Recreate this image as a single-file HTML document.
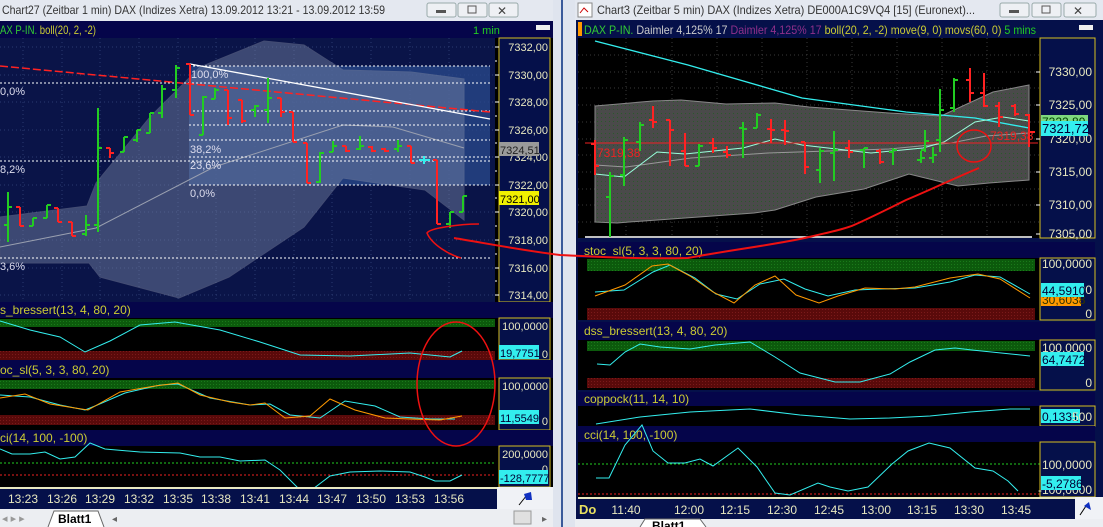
<!DOCTYPE html>
<html><head><meta charset="utf-8"><style>
html,body{margin:0;padding:0;width:1103px;height:527px;overflow:hidden;background:#d8dde8}
svg{display:block}
text{font-family:"Liberation Sans",sans-serif}
</style></head><body>
<svg width="1103" height="527" viewBox="0 0 1103 527" xmlns="http://www.w3.org/2000/svg">
<defs>
<pattern id="dots" width="4" height="4" patternUnits="userSpaceOnUse"><rect width="4" height="4" fill="#4a4a4a"/><rect x="1" y="1" width="1" height="1" fill="#2a5a2a"/></pattern>
<pattern id="gr" width="3" height="3" patternUnits="userSpaceOnUse"><rect width="3" height="3" fill="#0c5a0c"/><rect width="1" height="1" fill="#1a7a1a"/></pattern>
<pattern id="rd" width="3" height="3" patternUnits="userSpaceOnUse"><rect width="3" height="3" fill="#5a0a0a"/><rect width="1" height="1" fill="#7a1a1a"/></pattern>
</defs>
<rect x="0" y="0" width="555" height="527" fill="#e4e8f0"/>
<rect x="553" y="0" width="22" height="527" fill="#dfe4ee"/>
<rect x="561" y="0" width="2" height="527" fill="#3a5a9a"/>
<rect x="575" y="0" width="528" height="527" fill="#e4e8f0"/>
<text x="2" y="14" font-size="12" fill="#333" textLength="383" lengthAdjust="spacingAndGlyphs">Chart27 (Zeitbar 1 min)  DAX (Indizes Xetra) 13.09.2012 13:21  - 13.09.2012 13:59</text>
<g fill="#eef0f4" stroke="#9aa"><rect x="427" y="3" width="29" height="14" rx="2"/><rect x="458" y="3" width="29" height="14" rx="2"/><rect x="489" y="3" width="29" height="14" rx="2"/></g>
<rect x="436" y="10" width="10" height="3" fill="#555"/><rect x="468" y="6" width="8" height="7" fill="none" stroke="#555"/><text x="497" y="15" font-size="12" fill="#444">✕</text>
<rect x="578" y="3" width="14" height="14" fill="#fff" stroke="#888"/><path d="M580 13 L584 8 L588 12" stroke="#c00" fill="none"/>
<text x="597" y="14" font-size="12" fill="#333" textLength="378" lengthAdjust="spacingAndGlyphs">Chart3 (Zeitbar 5 min)  DAX (Indizes Xetra) DE000A1C9VQ4 [15] (Euronext)...</text>
<g fill="#eef0f4" stroke="#9aa"><rect x="1000" y="3" width="29" height="14" rx="2"/><rect x="1032" y="3" width="29" height="14" rx="2"/><rect x="1064" y="3" width="32" height="14" rx="2"/></g>
<rect x="1009" y="10" width="10" height="3" fill="#555"/><rect x="1042" y="6" width="8" height="7" fill="none" stroke="#555"/><text x="1073" y="15" font-size="12" fill="#444">✕</text>

<rect x="0" y="21" width="553" height="466" fill="#00003c"/>
<rect x="0" y="21" width="553" height="17" fill="#05054a"/>
<text x="0" y="34" font-size="12" textLength="96" lengthAdjust="spacingAndGlyphs"><tspan fill="#3c3">AX P-IN.</tspan><tspan fill="#cc3"> boll(20, 2, -2)</tspan></text>
<text x="473" y="34" font-size="11" fill="#2c2">1 min</text>
<rect x="536" y="25" width="14" height="5" fill="#eee"/>
<rect x="0" y="38" width="495" height="264" fill="#0a1448"/>
<g stroke="#2a3a70" stroke-dasharray="1,3"><path d="M0 47H495M0 75H495M0 102H495M0 130H495M0 157H495M0 185H495M0 212H495M0 240H495M0 268H495M0 295H495"/><path d="M23 38V302M62 38V302M100 38V302M139 38V302M178 38V302M216 38V302M255 38V302M294 38V302M332 38V302M371 38V302M410 38V302M449 38V302"/></g>
<rect x="189" y="66" width="301" height="119" fill="#2a4a8c" opacity="0.75"/>
<path d="M0 217L87 206L96 183L150 117L200 67L264 41L304 45L343 70L411 72L464 79L464 220L425 190L343 178L304 227L229 277L179 298L100 277L89 263L0 263Z" fill="#7a88a8" opacity="0.45" stroke="#8890a8"/>
<path d="M0 247L96 228L214 167L343 125L393 127L464 148" stroke="#9aa0b0" fill="none"/>
<g stroke="#fff" stroke-dasharray="2,2"><path d="M189 66H490M0 83H490M189 111H490M189 125H490M189 140H490M189 157H490M0 161H490M189 185H490M0 258H490"/></g>
<g font-size="11" fill="#dde"><text x="191" y="78">100,0%</text><text x="190" y="153">38,2%</text><text x="190" y="169">23,6%</text><text x="190" y="197">0,0%</text><text x="0" y="95">0,0%</text><text x="0" y="173">8,2%</text><text x="0" y="270">3,6%</text></g>
<path d="M0 66L490 112" stroke="#f22" stroke-width="1.5" stroke-dasharray="8,3"/>
<path d="M190 64L490 119" stroke="#fff" stroke-width="1.3"/>
<g stroke="#2c2" stroke-width="2" fill="none"><path d="M8 192V242M4 225H8M8 207H12M33 218V226M29 226H33M33 218H37M47 205V218M43 218H47M47 205H51M86 215V236M82 234H86M86 225H90M98 108V232M94 225H98M98 148H102M124 137V152M120 152H124M124 137H128M137 130V142M133 140H137M137 130H141M150 113V133M146 133H150M150 113H154M162 85V118M158 113H162M162 89H166M176 65V98M172 90H176M176 68H180M203 96V135M199 135H203M203 97H207M215 88V99M211 99H215M215 90H219M255 105V117M251 110H255M255 106H259M268 78V123M264 110H268M268 98H272M320 152V183M316 182H320M320 153H324M333 141V152M329 152H333M333 146H337M360 136V150M356 149H360M360 146H364M398 140V152M394 149H398M398 146H402M450 212V228M446 224H450M450 212H454M463 196V212M459 212H463M463 196H467"/></g>
<g stroke="#f22" stroke-width="2" fill="none"><path d="M20 207V226M16 207H20M20 226H24M58 208V222M54 208H58M58 222H62M72 222V236M68 222H72M72 236H76M110 148V158M106 148H110M110 153H114M190 64V115M186 64H190M190 115H194M228 90V125M224 90H228M228 118H232M242 100V123M238 100H242M242 121H246M281 98V117M277 98H281M281 112H285M293 112V142M289 112H293M293 142H297M307 143V183M303 143H307M307 183H311M346 146V152M342 146H346M346 151H350M372 146V152M368 147H372M372 151H376M385 148V152M381 149H385M385 151H389M411 146V163M407 146H411M411 163H415M437 160V224M433 160H437M437 224H441"/></g>
<path d="M419 160H430M424 156V164" stroke="#3ee" stroke-width="2"/>
<rect x="495" y="38" width="58" height="264" fill="#000"/>
<rect x="499" y="38" width="51" height="264" fill="#05104a" stroke="#d8c020"/>
<g stroke="#fff"><path d="M495 47h4M495 61h2M495 75h4M495 88h2M495 102h4M495 116h2M495 130h4M495 143h2M495 157h4M495 171h2M495 185h4M495 198h2M495 212h4M495 226h2M495 240h4M495 254h2M495 268h4M495 281h2M495 295h4"/></g>
<g font-size="11" fill="#e8e8c0" text-anchor="end"><text x="548" y="51">7332,00</text><text x="548" y="79">7330,00</text><text x="548" y="106">7328,00</text><text x="548" y="134">7326,00</text><text x="548" y="161">7324,00</text><text x="548" y="189">7322,00</text><text x="548" y="216">7320,00</text><text x="548" y="244">7318,00</text><text x="548" y="272">7316,00</text><text x="548" y="299">7314,00</text></g>
<rect x="499" y="142" width="40" height="14" fill="#9a9a9a"/><text x="500" y="154" font-size="11" fill="#222">7324,51</text>
<rect x="499" y="191" width="40" height="14" fill="#f0f000"/><text x="500" y="203" font-size="11" fill="#000">7321,00</text>
<rect x="0" y="302" width="553" height="16" fill="#05054a"/><text x="0" y="314" font-size="12" fill="#cc3">s_bressert(13, 4, 80, 20)</text>
<rect x="0" y="318" width="495" height="42" fill="#000"/>
<rect x="0" y="319" width="495" height="8" fill="url(#gr)"/><rect x="0" y="351" width="495" height="9" fill="url(#rd)"/>
<path d="M0 321L30 330L60 337L85 352L110 341L140 325L175 322L220 330L260 342L300 355L350 356L410 353L450 357L462 351" stroke="#3ee" fill="none"/>
<rect x="495" y="318" width="58" height="42" fill="#000"/><rect x="499" y="318" width="51" height="42" fill="#05104a" stroke="#d8c020"/>
<text x="548" y="330" font-size="11" fill="#e8e8c0" text-anchor="end">100,0000</text><text x="548" y="358" font-size="11" fill="#e8e8c0" text-anchor="end">0</text>
<rect x="499" y="345" width="40" height="14" fill="#3ee"/><text x="500" y="357" font-size="11" fill="#003">19,7751</text>
<rect x="0" y="360" width="553" height="18" fill="#05054a"/><text x="0" y="374" font-size="12" fill="#cc3">oc_sl(5, 3, 3, 80, 20)</text>
<rect x="0" y="378" width="495" height="52" fill="#000"/>
<rect x="0" y="380" width="495" height="9" fill="url(#gr)"/><rect x="0" y="415" width="495" height="10" fill="url(#rd)"/>
<path d="M0 395L30 397L60 405L85 410L95 406L125 393L160 385L178 384L210 398L250 405L270 404L290 415L320 418L345 401L375 406L400 417L430 419L455 419" stroke="#3ee" fill="none"/>
<path d="M0 398L25 394L50 404L75 408L88 410L120 392L155 386L178 383L200 395L230 402L250 405L265 403L285 418L310 416L330 399L355 410L385 418L410 419L440 420L462 416" stroke="#f90" fill="none"/>
<rect x="495" y="378" width="58" height="52" fill="#000"/><rect x="499" y="378" width="51" height="52" fill="#05104a" stroke="#d8c020"/>
<text x="548" y="390" font-size="11" fill="#e8e8c0" text-anchor="end">100,0000</text><text x="548" y="425" font-size="11" fill="#e8e8c0" text-anchor="end">0</text>
<rect x="499" y="410" width="40" height="14" fill="#3ee"/><text x="500" y="422" font-size="11" fill="#003">11,5549</text>
<rect x="0" y="430" width="553" height="16" fill="#05054a"/><text x="0" y="442" font-size="12" fill="#cc3">ci(14, 100, -100)</text>
<rect x="0" y="446" width="495" height="41" fill="#000"/>
<path d="M0 463H495" stroke="#2c2" stroke-dasharray="2,2"/><path d="M0 475H495" stroke="#e22" stroke-dasharray="2,2"/>
<path d="M0 449L12 454L30 454L45 452L60 459L75 457L90 443L105 449L140 452L180 453L200 457L220 457L240 461L265 460L280 470L305 495L330 476L350 472L380 471L410 472L425 477L435 481L450 481L462 475" stroke="#3ee" fill="none"/>
<rect x="495" y="446" width="58" height="41" fill="#000"/><rect x="499" y="446" width="51" height="41" fill="#05104a" stroke="#d8c020"/>
<text x="548" y="458" font-size="11" fill="#e8e8c0" text-anchor="end">200,0000</text><text x="548" y="473" font-size="11" fill="#e8e8c0" text-anchor="end">0</text>
<rect x="499" y="470" width="49" height="14" fill="#3ee"/><text x="500" y="482" font-size="11" fill="#003">-128,7777</text>
<rect x="0" y="487" width="497" height="22" fill="#05104a"/><path d="M0 488H497" stroke="#e8e8c0" stroke-width="2"/>
<g font-size="12" fill="#e8e8c0" text-anchor="middle"><text x="23" y="503">13:23</text><text x="62" y="503">13:26</text><text x="100" y="503">13:29</text><text x="139" y="503">13:32</text><text x="178" y="503">13:35</text><text x="216" y="503">13:38</text><text x="255" y="503">13:41</text><text x="294" y="503">13:44</text><text x="332" y="503">13:47</text><text x="371" y="503">13:50</text><text x="410" y="503">13:53</text><text x="449" y="503">13:56</text></g>
<rect x="497" y="487" width="56" height="22" fill="#f0f2f6"/><path d="M519 505L527 495" stroke="#000"/><path d="M524 494L531 492L532 500L526 500Z" fill="#1030c0"/>
<rect x="0" y="509" width="553" height="18" fill="#eceef2"/>
<text x="2" y="522" font-size="11" fill="#999">◂ ▸ ▸</text>
<path d="M48 527L54 511H98L104 527" fill="#fff" stroke="#666"/><text x="58" y="523" font-size="12" font-weight="bold" fill="#000">Blatt1</text>
<text x="112" y="522" font-size="10" fill="#666">◂</text>
<rect x="514" y="511" width="17" height="13" fill="#e0e0e0" stroke="#999"/><text x="542" y="522" font-size="10" fill="#666">▸</text>
<ellipse cx="456" cy="384" rx="39" ry="62" fill="none" stroke="#e11" stroke-width="1.5"/>
<path d="M479 224C460 224 430 228 427 233C432 245 450 255 461 258" stroke="#e11" stroke-width="1.6" fill="none"/>

<rect x="576" y="20" width="527" height="500" fill="#05104a"/>
<rect x="578" y="22" width="4" height="14" fill="#f90"/>
<text x="584" y="34" font-size="12" textLength="452" lengthAdjust="spacingAndGlyphs"><tspan fill="#3c3">DAX P-IN.</tspan><tspan fill="#ccc"> Daimler  4,125% 17 </tspan><tspan fill="#90308a">Daimler  4,125% 17 </tspan><tspan fill="#cc3">boll(20, 2, -2) move(9, 0) movs(60, 0)</tspan><tspan fill="#2c2">   5 mins</tspan></text>
<rect x="1079" y="25" width="14" height="5" fill="#eee"/>
<rect x="578" y="38" width="462" height="200" fill="#000"/>
<g stroke="#3a3a3a" stroke-dasharray="1,3"><path d="M578 72H1040M578 105H1040M578 139H1040M578 172H1040M578 205H1040M578 55H1040M578 88H1040M578 122H1040M578 155H1040M578 189H1040M578 222H1040"/><path d="M626 38V238M672 38V238M717 38V238M762 38V238M807 38V238M852 38V238M897 38V238M942 38V238M987 38V238"/></g>
<path d="M595 106L653 101L681 100L726 104L775 103L809 107L889 113L941 116L993 92L1029 85L1029 180L989 183L958 186L909 174L864 189L816 197L775 210L754 213L629 222L617 223L595 222Z" fill="url(#dots)" stroke="#888"/>
<path d="M595 165L626 167L691 158L768 153L889 149L951 143L986 136L1029 133" stroke="#999" fill="none"/>
<path d="M595 41L688 65L802 98L906 112L975 118L1029 128" stroke="#3ee" fill="none" stroke-width="1.3"/>
<path d="M595 174L624 177L657 152L685 154L743 148L775 139L802 145L871 153L923 148L944 142L975 122L1003 117L1029 121" stroke="#9fd" fill="none"/>
<path d="M585 143H1038" stroke="#e22"/><path d="M585 237H1032" stroke="#fff" stroke-width="1.5"/>
<text x="597" y="157" font-size="12" fill="#e22">7319,38</text><text x="990" y="140" font-size="12" fill="#e22">7319,38</text>
<g stroke="#2c2" stroke-width="2" fill="none"><path d="M610 172V237M606 197H610M610 176H614M624 137V186M620 175H624M624 140H628M640 122V151M636 142H640M640 125H644M699 144V166M695 166H699M699 146H703M743 122V158M739 128H743M743 129H747M757 113V128M753 128H757M757 115H761M820 148V183M816 170H820M820 151H824M834 131V181M830 153H834M834 150H838M864 148V168M860 150H864M864 148H868M893 148V165M889 152H893M893 150H897M921 151V163M917 160H921M921 158H925M933 147V163M929 158H933M933 155H937M925 130V152M921 150H925M925 141H929M940 89V152M936 140H940M940 110H944M954 78V112M950 108H954M954 80H958"/></g>
<g stroke="#f22" stroke-width="2" fill="none"><path d="M595 140V175M591 144H595M595 166H599M653 106V128M649 120H653M653 122H657M670 120V166M666 120H670M670 130H674M685 133V166M681 151H685M685 166H689M713 138V153M709 143H713M713 148H717M727 146V158M723 152H727M727 155H731M771 119V143M767 129H771M771 130H775M785 120V145M781 130H785M785 131H789M805 142V174M801 142H805M805 167H809M849 140V158M845 148H849M849 152H853M880 149V164M876 151H880M880 162H884M970 68V102M966 80H970M970 93H974M984 73V107M980 93H984M984 106H988M999 102V127M995 106H999M999 117H1003M1015 104V116M1011 106H1015M1015 114H1019M1029 114V147M1025 115H1029M1029 132H1035"/></g>
<rect x="1040" y="38" width="55" height="200" fill="#05104a" stroke="#d8c020"/>
<g stroke="#fff"><path d="M1036 72h4M1036 105h4M1036 139h4M1036 172h4M1036 205h4M1036 234h4"/></g>
<g font-size="12" fill="#e8e8c0" text-anchor="end"><text x="1092" y="76">7330,00</text><text x="1092" y="109">7325,00</text><text x="1092" y="143">7320,00</text><text x="1092" y="176">7315,00</text><text x="1092" y="209">7310,00</text><text x="1092" y="238">7305,00</text></g>
<rect x="1041" y="115" width="47" height="13" fill="#7ed87e"/><text x="1042" y="126" font-size="12" fill="#040">7322,89</text>
<rect x="1041" y="121" width="47" height="15" fill="#3ee"/><text x="1042" y="133" font-size="13" fill="#003">7321,72</text>
<rect x="578" y="242" width="517" height="16" fill="#05054a"/><text x="584" y="255" font-size="12" fill="#cc3">stoc_sl(5, 3, 3, 80, 20)</text>
<rect x="578" y="258" width="462" height="62" fill="#000"/>
<rect x="587" y="259" width="448" height="12" fill="url(#gr)"/><rect x="587" y="308" width="448" height="12" fill="url(#rd)"/>
<path d="M595 292L624 290L653 272L670 265L695 278L716 294L737 299L760 284L784 279L805 289L828 296L855 290L880 289L915 288L950 282L975 275L1000 277L1030 294" stroke="#3ee" fill="none"/>
<path d="M595 296L625 285L652 266L668 264L690 276L713 292L734 303L755 285L775 276L796 295L819 303L838 296L865 288L895 289L915 287L950 278L978 274L1000 279L1030 298" stroke="#f90" fill="none"/>
<rect x="1040" y="258" width="55" height="62" fill="#05104a" stroke="#d8c020"/>
<text x="1092" y="268" font-size="12" fill="#e8e8c0" text-anchor="end">100,0000</text><text x="1092" y="294" font-size="12" fill="#e8e8c0" text-anchor="end">50,0000</text><text x="1092" y="318" font-size="12" fill="#e8e8c0" text-anchor="end">0</text>
<rect x="1041" y="292" width="40" height="14" fill="#f90"/><text x="1042" y="304" font-size="12" fill="#330">30,6038</text>
<rect x="1041" y="283" width="43" height="14" fill="#3ee"/><text x="1042" y="295" font-size="12" fill="#003">44,5910</text>
<rect x="578" y="322" width="517" height="18" fill="#05054a"/><text x="584" y="335" font-size="12" fill="#cc3">dss_bressert(13, 4, 80, 20)</text>
<rect x="578" y="340" width="462" height="50" fill="#000"/>
<rect x="587" y="341" width="448" height="10" fill="url(#gr)"/><rect x="587" y="378" width="448" height="10" fill="url(#rd)"/>
<path d="M597 364L610 365L625 352L640 344L660 347L690 349L715 345L750 342L775 357L800 373L835 382L860 382L890 374L910 362L935 350L955 348L972 350L1030 356" stroke="#3ee" fill="none"/>
<rect x="1040" y="340" width="55" height="50" fill="#05104a" stroke="#d8c020"/>
<text x="1092" y="352" font-size="12" fill="#e8e8c0" text-anchor="end">100,0000</text><text x="1092" y="387" font-size="12" fill="#e8e8c0" text-anchor="end">0</text>
<rect x="1041" y="352" width="43" height="14" fill="#3ee"/><text x="1042" y="364" font-size="12" fill="#003">64,7472</text>
<rect x="578" y="392" width="517" height="14" fill="#05054a"/><text x="584" y="403" font-size="12" fill="#cc3">coppock(11, 14, 10)</text>
<rect x="578" y="406" width="462" height="20" fill="#000"/>
<path d="M596 424L640 417L690 412L750 409L800 415L850 419L890 418L930 416L970 412L1010 409L1030 409" stroke="#3ee" fill="none"/>
<rect x="1040" y="406" width="55" height="20" fill="#05104a" stroke="#d8c020"/>
<rect x="1041" y="409" width="39" height="14" fill="#3ee"/><text x="1042" y="421" font-size="12" fill="#003">0,1331</text><text x="1092" y="421" font-size="12" fill="#e8e8c0" text-anchor="end">500</text>
<rect x="578" y="426" width="517" height="16" fill="#05054a"/><text x="584" y="439" font-size="12" fill="#cc3">cci(14, 100, -100)</text>
<rect x="578" y="442" width="462" height="55" fill="#000"/>
<path d="M578 464H1040" stroke="#2c2" stroke-dasharray="2,2"/><path d="M578 494H1040" stroke="#e22" stroke-dasharray="2,2"/>
<path d="M596 478L609 478L625 445L642 425L653 451L668 463L685 463L700 459L713 466L738 448L757 467L775 493L790 495L818 483L830 487L848 491L868 487L892 464L908 451L929 443L950 448L975 468L993 471L1008 481L1018 491" stroke="#3ee" fill="none"/>
<rect x="1040" y="442" width="55" height="55" fill="#05104a" stroke="#d8c020"/>
<text x="1092" y="469" font-size="12" fill="#e8e8c0" text-anchor="end">100,0000</text><text x="1092" y="494" font-size="12" fill="#e8e8c0" text-anchor="end">-100,0000</text>
<rect x="1041" y="476" width="40" height="14" fill="#3ee"/><text x="1042" y="488" font-size="12" fill="#003">-5,2786</text>
<rect x="578" y="497" width="497" height="22" fill="#05104a"/><path d="M578 498H1075" stroke="#e8e8c0" stroke-width="2"/>
<text x="579" y="514" font-size="13" font-weight="bold" fill="#e8e060">Do</text>
<g font-size="12" fill="#e8e8c0" text-anchor="middle"><text x="626" y="514">11:40</text><text x="689" y="514">12:00</text><text x="735" y="514">12:15</text><text x="782" y="514">12:30</text><text x="829" y="514">12:45</text><text x="876" y="514">13:00</text><text x="922" y="514">13:15</text><text x="969" y="514">13:30</text><text x="1016" y="514">13:45</text></g>
<rect x="1075" y="497" width="28" height="22" fill="#f0f2f6"/><path d="M1080 515L1086 506" stroke="#000"/><path d="M1084 506L1089 502L1091 510Z" fill="#1030c0"/>
<rect x="575" y="519" width="528" height="8" fill="#eceef2"/>
<path d="M640 527L645 519H700L706 527" fill="#fff" stroke="#666"/><text x="652" y="530" font-size="12" font-weight="bold" fill="#000">Blatt1</text>
<path d="M454 238C490 244 520 250 560 255C600 257 640 259 688 258C730 250 780 244 809 237C830 232 845 229 854 225C870 218 890 208 906 200C930 190 955 178 979 168" stroke="#e11" stroke-width="2" fill="none"/>
<ellipse cx="974" cy="146" rx="17" ry="16" fill="none" stroke="#e11" stroke-width="1.5"/>
</svg>
</body></html>
